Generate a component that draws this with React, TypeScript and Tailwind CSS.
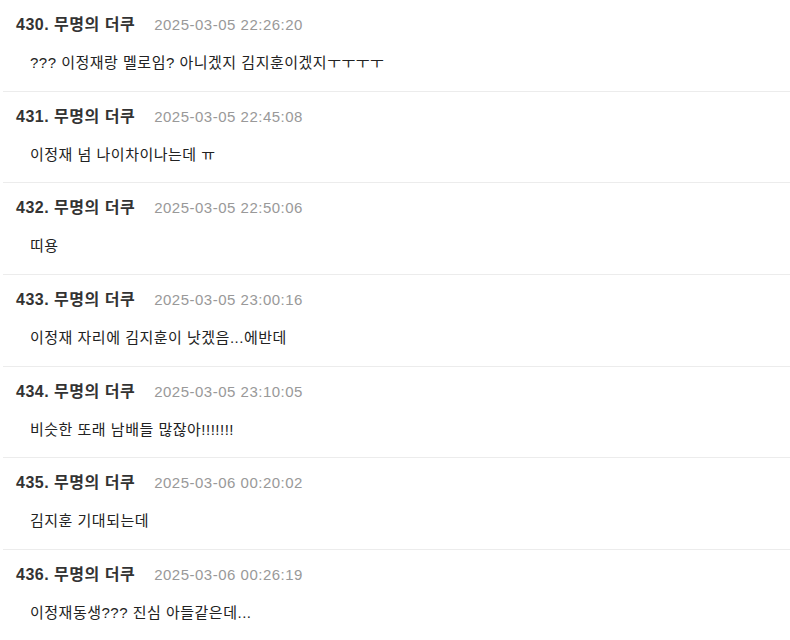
const comments = [
  { no: 430, date: "2025-03-05 22:26:20", text: "??? 이정재랑 멜로임? 아니겠지 김지훈이겠지ㅜㅜㅜㅜ" },
  { no: 431, date: "2025-03-05 22:45:08", text: "이정재 넘 나이차이나는데 ㅠ" },
  { no: 432, date: "2025-03-05 22:50:06", text: "띠용" },
  { no: 433, date: "2025-03-05 23:00:16", text: "이정재 자리에 김지훈이 낫겠음...에반데" },
  { no: 434, date: "2025-03-05 23:10:05", text: "비슷한 또래 남배들 많잖아!!!!!!!" },
  { no: 435, date: "2025-03-06 00:20:02", text: "김지훈 기대되는데" },
  { no: 436, date: "2025-03-06 00:26:19", text: "이정재동생??? 진심 아들같은데..." },
];

export default function App() {
  return (
    <div
      className="w-[790px] h-[640px] overflow-hidden bg-white pl-[3px]"
      style={{ fontFamily: '"Liberation Sans", "Noto Sans CJK KR", sans-serif' }}
    >
      <ul>
        {comments.map((c) => (
          <li key={c.no} className="border-b border-[#ececec] pl-[13px] pt-[14px] pb-[16.67px]">
            <div className="flex items-center h-[22px] leading-[22px]">
              <span className="text-[16px] font-bold tracking-[0.5px] text-[#333333]">
                {c.no}. 무명의 더쿠
              </span>
              <span className="ml-[19px] text-[15px] tracking-[0.5px] text-[#999999]">{c.date}</span>
            </div>
            <p className="mt-[16px] pl-[14px] h-[22px] leading-[22px] text-[15px] tracking-[0.5px] text-[#222222]">
              {c.text}
            </p>
          </li>
        ))}
      </ul>
    </div>
  );
}
